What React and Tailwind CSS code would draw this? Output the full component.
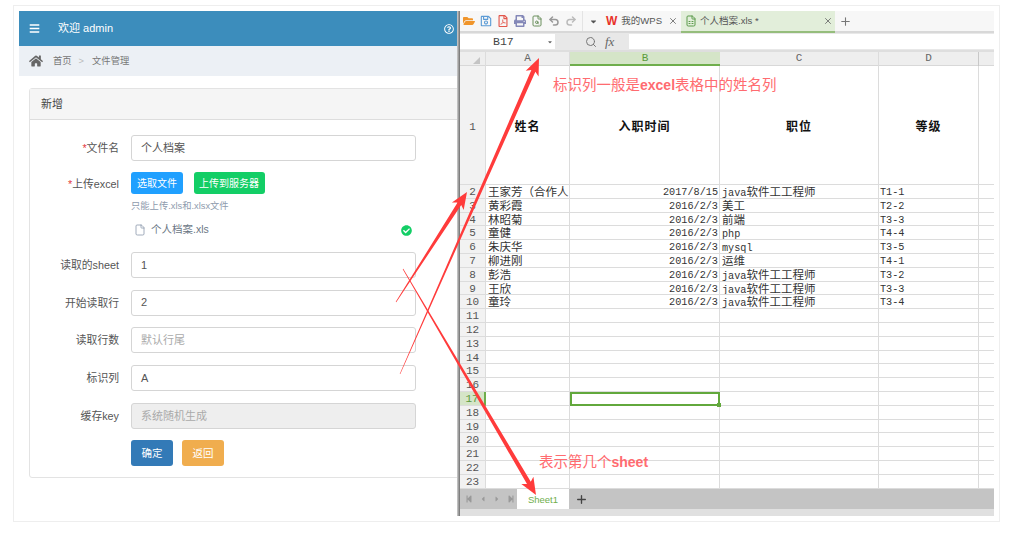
import { FaBars, FaHome, FaRegQuestionCircle, FaCheckCircle, FaFolderOpen, FaPrint, FaRegSave, FaRegFilePdf, FaStepBackward, FaStepForward, FaCaretLeft, FaCaretRight, FaCaretDown } from "react-icons/fa";
import { File, FileSearch, FileSpreadsheet, Undo2, Redo2, Search, X, Plus } from "lucide-react";

const sans = "font-['Liberation_Sans','Noto_Sans_CJK_SC',sans-serif]";
const mono = "font-['Liberation_Mono','Noto_Sans_CJK_SC',monospace]";

const people = [
  ["王家芳（合作人", "2017/8/15", "java", "软件工工程师", "T1-1"],
  ["黄彩霞", "2016/2/3", "", "美工", "T2-2"],
  ["林昭菊", "2016/2/3", "", "前端", "T3-3"],
  ["童健", "2016/2/3", "php", "", "T4-4"],
  ["朱庆华", "2016/2/3", "mysql", "", "T3-5"],
  ["柳进刚", "2016/2/3", "", "运维", "T4-1"],
  ["彭浩", "2016/2/3", "java", "软件工工程师", "T3-2"],
  ["王欣", "2016/2/3", "java", "软件工工程师", "T3-3"],
  ["童玲", "2016/2/3", "java", "软件工工程师", "T3-4"],
];

const cols = "grid grid-cols-[26px_84px_150px_159px_100px_15px]";
const cell = "border-r border-b border-[#dcdcdc] overflow-hidden whitespace-nowrap";
const lastCell = "border-b border-[#dcdcdc]";

function FormRow({ label, star, value, placeholder, disabled }) {
  return (
    <div className="flex items-center mb-[11.7px]">
      <label className="w-[89px] text-right text-[#555] text-[10.8px] shrink-0">
        {star && <span className="text-[#e4393c]">*</span>}
        {label}
      </label>
      <div
        className={`ml-[12px] w-[285px] h-[26px] flex items-center px-[9px] rounded-[3px] border border-[#d5d5d5] text-[11px] ${
          disabled ? "bg-[#eeeeee] text-[#aaa]" : "bg-white"
        } ${placeholder ? "text-[#aaa]" : "text-[#555]"}`}
      >
        {value || placeholder}
      </div>
    </div>
  );
}

function LeftPanel() {
  return (
    <div className={`w-[438px] shrink-0 overflow-hidden ${sans}`}>
      <div className="h-[35px] bg-[#3c8dbc] flex items-center text-white pl-[10px] pr-[3px]">
        <FaBars className="text-[11px]" />
        <span className="ml-[18px] text-[11px]">欢迎 admin</span>
        <FaRegQuestionCircle className="ml-auto text-[10px]" />
      </div>
      <div className="h-[30px] bg-[#ecf0f5] flex items-center pl-[10px] text-[9.3px] text-[#777]">
        <FaHome className="text-[14px] text-[#666]" />
        <span className="ml-[10px] pt-[1px]">首页</span>
        <span className="ml-[7px] pt-[1px] text-[#bbb]">&gt;</span>
        <span className="ml-[8px] pt-[1px]">文件管理</span>
      </div>
      <div className="mt-[12px] ml-[10px] w-[440px] h-[390px] border border-[#e3e3e3] rounded-[3px]">
        <div className="h-[31px] bg-[#f5f5f5] border-b border-[#dddddd] flex items-center pl-[11px] text-[11px] text-[#444]">
          新增
        </div>
        <div className="pt-[15px]">
          <FormRow label="文件名" star value="个人档案" />
          <div className="flex -mt-[0.7px]">
            <label className="w-[89px] pt-[4px] text-right text-[#555] text-[10.8px] shrink-0">
              <span className="text-[#e4393c]">*</span>上传excel
            </label>
            <div className="ml-[12px] w-[285px]">
              <div className="flex gap-[10.5px]">
                <div className="w-[52px] h-[22px] rounded-[3px] bg-[#20a0ff] text-white text-[10px] flex items-center justify-center">选取文件</div>
                <div className="w-[71px] h-[22px] rounded-[3px] bg-[#13ce66] text-white text-[10px] flex items-center justify-center">上传到服务器</div>
              </div>
              <div className="mt-[5px] text-[9.3px] leading-[14px] text-[#8e9bad]">只能上传.xls和.xlsx文件</div>
              <div className="mt-[8px] h-[18px] flex items-center text-[10.5px] text-[#6b7785]">
                <File size={12} className="ml-[3px] text-[#8391a5]" strokeWidth={1.5} />
                <span className="ml-[5px]">个人档案.xls</span>
                <FaCheckCircle className="ml-auto mr-[4px] text-[11px] text-[#13ce66]" />
              </div>
            </div>
          </div>
          <div className="mt-[13px]">
            <FormRow label="读取的sheet" value="1" />
            <FormRow label="开始读取行" value="2" />
            <FormRow label="读取行数" placeholder="默认行尾" />
            <FormRow label="标识列" value="A" />
            <FormRow label="缓存key" placeholder="系统随机生成" disabled />
          </div>
          <div className="ml-[101px] flex gap-[9px]">
            <div className="w-[42px] h-[26px] rounded-[3px] bg-[#337ab7] text-white text-[10.5px] flex items-center justify-center">确定</div>
            <div className="w-[42px] h-[26px] rounded-[3px] bg-[#f0ad4e] text-white text-[10.5px] flex items-center justify-center">返回</div>
          </div>
        </div>
      </div>
    </div>
  );
}

function TabBar() {
  return (
    <div className="h-[22px] bg-[#f7f7f7] border-b-2 border-[#d8d8d8] flex items-center text-[9.5px] text-[#555] shrink-0">
      <div className="w-[123px] flex items-center gap-[5px] pl-[3px] h-full border-r border-[#e4e4e4]">
        <FaFolderOpen className="w-[12px] h-[12px] text-[#f0952b]" />
        <FaRegSave className="w-[12px] h-[12px] text-[#5b9bd5]" />
        <FaRegFilePdf className="w-[12px] h-[12px] text-[#e2574c]" />
        <FaPrint className="w-[12px] h-[12px] text-[#8488b8]" />
        <FileSearch size={12} className="text-[#6a8f5c]" />
        <Undo2 size={12} strokeWidth={3} className="text-[#999]" />
        <Redo2 size={12} strokeWidth={3} className="text-[#bbb]" />
      </div>
      <div className="w-[21px] h-full flex items-center justify-center">
        <FaCaretDown className="text-[9px] text-[#555]" />
      </div>
      <div className="w-[77px] h-full flex items-center pl-[2px]">
        <span className="text-[12px] font-bold text-[#e8332a] leading-none">W</span>
        <span className="ml-[4px]">我的WPS</span>
        <X size={10} className="ml-auto mr-[3px] text-[#666]" />
      </div>
      <div className="w-[154px] h-[22px] bg-[#e2eeda] border-b-2 border-[#95bd7c] flex items-center pl-[4px] mt-[2px]">
        <FileSpreadsheet size={12} className="text-[#5a9a4a]" />
        <span className="ml-[3px]">个人档案.xls *</span>
        <X size={10} className="ml-auto mr-[2px] text-[#666]" />
      </div>
      <Plus size={13} className="ml-[4px] text-[#777]" />
    </div>
  );
}

function Grid() {
  const blank = [];
  for (let n = 11; n <= 23; n++) blank.push(n);

  return (
    <div className={`flex-1 bg-white overflow-hidden ${mono}`}>
      <div className={`${cols} h-[14px] bg-[#eeeeee] text-[11px] text-[#666] leading-[13px] text-center border-b border-[#d8d8d8]`}>
        <div className="border-r border-[#dcdcdc] flex justify-end items-end pr-[5px] pb-[2px]">
          <div className="w-0 h-0 border-l-[7px] border-l-transparent border-b-[7px] border-b-[#c4c4c4]" />
        </div>
        <div className="border-r border-[#dcdcdc]">A</div>
        <div className="h-[14px] bg-[#d5e5c8] border-b-2 border-[#6fae4c] text-[#5a9a3c]">B</div>
        <div className="border-r border-[#dcdcdc]">C</div>
        <div className="border-r border-[#c8c8c8]">D</div>
        <div />
      </div>

      <div className={`${cols} h-[119px] text-[12px] font-bold text-[#111]`}>
        <div className={`${cell} bg-[#f2f2f2] !font-normal text-[11px] text-[#555] flex items-center justify-center pt-[5px]`}>1</div>
        <div className={`${cell} flex items-center justify-center tracking-[1px] pt-[5px]`}>姓名</div>
        <div className={`${cell} flex items-center justify-center tracking-[1px] pt-[5px]`}>入职时间</div>
        <div className={`${cell} flex items-center justify-center tracking-[1px] pt-[5px]`}>职位</div>
        <div className={`${cell} flex items-center justify-center tracking-[1px] pt-[5px]`}>等级</div>
        <div className={lastCell} />
      </div>

      {people.map((p, i) => (
        <div key={i} className={`${cols} h-[13.8px] text-[10.2px] leading-[13px] text-[#333]`}>
          <div className={`${cell} pt-[1px] bg-[#f2f2f2] text-[11px] text-[#555] text-center`}>{i + 2}</div>
          <div className={`${cell} pt-[1px] text-[11.5px] pl-[2px]`}>{p[0]}</div>
          <div className={`${cell} pt-[1px] text-right pr-[1px]`}>{p[1]}</div>
          <div className={`${cell} pt-[1px] pl-[2px]`}>
            {p[2]}
            <span className="text-[11.5px]">{p[3]}</span>
          </div>
          <div className={`${cell} pt-[1px] pl-[1px]`}>{p[4]}</div>
          <div className={lastCell} />
        </div>
      ))}

      {blank.map((n) => (
        <div key={n} className={`${cols} h-[13.8px] text-[11px] leading-[13px]`}>
          <div className={`${cell} pt-[1px] text-center ${n === 17 ? "bg-[#d5e5c8] text-[#5a9a3c] border-r-2 border-r-[#6fae4c]" : "bg-[#f2f2f2] text-[#555]"}`}>{n}</div>
          <div className={cell} />
          {n === 17 ? (
            <div className="relative border-2 border-[#62a83c]">
              <div className="absolute -right-[3px] -bottom-[3px] w-[4px] h-[4px] bg-[#62a83c]" />
            </div>
          ) : (
            <div className={cell} />
          )}
          <div className={cell} />
          <div className={cell} />
          <div className={lastCell} />
        </div>
      ))}
    </div>
  );
}

function Sheet() {
  return (
    <div className={`relative w-[534px] shrink-0 flex flex-col overflow-hidden ${sans}`}>
      <TabBar />
      <div className="h-[19px] bg-[#e8e8e8] flex items-center shrink-0 border-b-2 border-[#dedede]">
        <div className={`w-[95px] h-[15px] bg-white flex items-center text-[11.5px] text-[#444] ${mono}`}>
          <span className="ml-[33px]">B17</span>
          <FaCaretDown className="ml-auto mr-[2px] text-[6px] text-[#666]" />
        </div>
        <Search size={12} className="ml-[30px] text-[#777]" />
        <span className="ml-[8px] text-[13px] italic font-['Liberation_Serif',serif] text-[#666]">fx</span>
        <div className="ml-[15px] flex-1 h-[15px] bg-white" />
      </div>
      <Grid />
      <div className="h-[20px] bg-[#c4c4c4] flex items-center shrink-0">
        <div className="flex items-center gap-[6px] pl-[5px] w-[57px] text-[8px] text-[#999]">
          <FaStepBackward />
          <FaCaretLeft />
          <FaCaretRight />
          <FaStepForward />
        </div>
        <div className="w-[52px] h-full bg-white text-[#6fae4c] text-[9.5px] flex items-center justify-center pt-[3px]">Sheet1</div>
        <Plus size={13} strokeWidth={2.5} className="ml-[6px] text-[#444]" />
      </div>
      <div className="h-[7px] bg-[#e0e0e0] shrink-0" />
      <div className="absolute left-[93px] top-[66px] text-[14.5px] leading-[16px] text-[#ff6b70] whitespace-nowrap">
        标识列一般是<span className="font-bold text-[14px]">excel</span>表格中的姓名列
      </div>
      <div className="absolute left-[79px] top-[443px] text-[14.5px] leading-[16px] text-[#ff6b70] whitespace-nowrap">
        表示第几个<span className="font-bold text-[14px]">sheet</span>
      </div>
    </div>
  );
}

// tapered annotation arrow, thin at the tail and fat at the head
function Arrow({ x1, y1, x2, y2 }) {
  const len = Math.hypot(x2 - x1, y2 - y1);
  const ux = (x2 - x1) / len;
  const uy = (y2 - y1) / len;
  const nx = -uy;
  const ny = ux;
  const bx = x2 - ux * 17;
  const by = y2 - uy * 17;
  const pts = [
    [x1 - nx * 0.3, y1 - ny * 0.3],
    [bx + ux * 3 - nx * 2.2, by + uy * 3 - ny * 2.2],
    [bx - nx * 7, by - ny * 7],
    [x2, y2],
    [bx + nx * 7, by + ny * 7],
    [bx + ux * 3 + nx * 2.2, by + uy * 3 + ny * 2.2],
    [x1 + nx * 0.3, y1 + ny * 0.3],
  ];
  return <polygon points={pts.map((p) => p.join(",")).join(" ")} fill="#ff3b3b" />;
}

export default function App() {
  return (
    <div className="relative w-[1017px] h-[533px] bg-white overflow-hidden pt-[5px] pl-[13px]">
      <div className="w-[987px] h-[517px] border border-[#eeeeee] p-[5px] flex">
        <LeftPanel />
        <div className="w-[3px] shrink-0 bg-linear-to-r from-[#d0d0d0] to-[#6f6f6f]" />
        <Sheet />
      </div>
      <svg className="absolute inset-0 pointer-events-none" width="1017" height="533">
        <Arrow x1={396} y1={302} x2={467} y2={192} />
        <Arrow x1={400} y1={374} x2={539} y2={58} />
        <Arrow x1={403} y1={269} x2={536} y2={495} />
      </svg>
    </div>
  );
}
